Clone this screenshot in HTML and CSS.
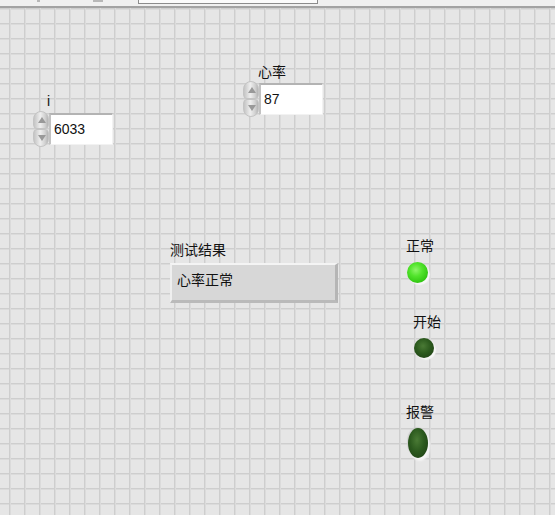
FILE: index.html
```html
<!DOCTYPE html>
<html>
<head>
<meta charset="utf-8">
<link rel="stylesheet" href="styles.css">
</head>
<body>
<div class="toolbar">
  <div class="tb-box"></div>
  <span class="tb-mark tb-m1"></span>
  <span class="tb-mark tb-m2"></span>
</div>
<div class="panel">
  <div class="label lbl-i">i</div>
  <div class="num num-i">
    <div class="spin"><span class="btn up"><i></i></span><span class="btn down"><i></i></span></div>
    <div class="field">6033</div>
  </div>

  <div class="label lbl-hr">心率</div>
  <div class="num num-hr">
    <div class="spin"><span class="btn up"><i></i></span><span class="btn down"><i></i></span></div>
    <div class="field">87</div>
  </div>

  <div class="label lbl-res">测试结果</div>
  <div class="strind"><div class="strind-in">心率正常</div></div>

  <div class="label lbl-ok">正常</div>
  <div class="led led-ok"></div>

  <div class="label lbl-start">开始</div>
  <div class="led led-start"></div>

  <div class="label lbl-alarm">报警</div>
  <div class="led led-alarm"></div>
</div>
</body>
</html>
```

FILE: styles.css
```css
html, body {
  margin: 0;
  padding: 0;
  width: 555px;
  height: 515px;
  overflow: hidden;
  font-family: "Liberation Sans", "Noto Sans CJK SC", sans-serif;
}
.toolbar {
  position: relative;
  height: 6px;
  background: #f0f0f0;
  border-bottom: 2px solid #a3a3a3;
}
.tb-box {
  position: absolute;
  left: 138px;
  top: -2px;
  width: 178px;
  height: 5px;
  background: #fbfbfb;
  border: 1px solid #8c8c8c;
  border-top: none;
}
.tb-mark {
  position: absolute;
  top: 0;
  height: 2px;
  background: #b8b8b8;
}
.tb-m1 { left: 37px; width: 3px; }
.tb-m2 { left: 93px; width: 10px; }
.panel {
  position: relative;
  height: 507px;
  background-color: #e6e6e6;
  background-image:
    linear-gradient(to right, #cecece 0, #cecece 1px, #dbdbdb 1px, #dbdbdb 2px, transparent 2px),
    linear-gradient(to bottom, #cecece 0, #cecece 1px, #dbdbdb 1px, #dbdbdb 2px, transparent 2px);
  background-size: 15px 15px;
  background-position: 9px 0px, 0 0px;
}
.label {
  position: absolute;
  font-family: "Noto Sans CJK SC", "Liberation Sans", sans-serif;
  font-size: 14px;
  line-height: 16px;
  color: #111;
  white-space: nowrap;
}
.lbl-i { left: 47px; top: 85px; font-family: "Liberation Sans", sans-serif; font-size: 14px; }
.lbl-hr { left: 258px; top: 55px; }
.lbl-res { left: 170px; top: 233px; }
.lbl-ok { left: 406px; top: 229px; }
.lbl-start { left: 413px; top: 305px; }
.lbl-alarm { left: 406px; top: 395px; }

.num {
  position: absolute;
  display: flex;
  align-items: center;
}
.num-i { left: 33px; top: 103px; }
.num-hr { left: 243px; top: 73px; }
.spin {
  display: flex;
  flex-direction: column;
  width: 16px;
  height: 36px;
}
.btn {
  position: relative;
  flex: 1;
  border-radius: 8px 8px 4px 4px;
  background: linear-gradient(to right, #c4c4c4, #eeeeee 45%, #d0d0d0 80%, #b4b4b4);
  border: 1px solid #c4c4c4;
}
.btn.down { border-radius: 4px 4px 8px 8px; }
.btn i {
  position: absolute;
  left: 4px;
  width: 0;
  height: 0;
  border-left: 4px solid transparent;
  border-right: 4px solid transparent;
}
.btn.up i { top: 5px; border-bottom: 6px solid #999; }
.btn.down i { top: 5px; border-top: 6px solid #999; }
.field {
  width: 58px;
  height: 29px;
  background: #fff;
  border-top: 2px solid #b3b3b3;
  border-left: 2px solid #c2c2c2;
  border-right: 1px solid #f2f2f2;
  border-bottom: 1px solid #f2f2f2;
  padding-left: 3px;
  font-size: 14px;
  line-height: 29px;
  color: #111;
}
.strind {
  position: absolute;
  left: 170px;
  top: 255px;
  width: 168px;
  height: 40px;
  box-sizing: border-box;
  border-top: 2px solid #f4f4f4;
  border-left: 2px solid #efefef;
  border-right: 3px solid #b5b5b5;
  border-bottom: 3px solid #bababa;
  background: #d7d7d7;
}
.strind-in {
  padding: 5px 0 0 5px;
  font-family: "Noto Sans CJK SC", sans-serif;
  font-size: 14px;
  line-height: 18px;
  color: #111;
}
.led {
  position: absolute;
  border-radius: 50%;
}
.led-ok {
  left: 407px;
  top: 254px;
  width: 21px;
  height: 21px;
  background: radial-gradient(circle at 42% 38%, #8ef56a 0, #52e42c 35%, #2fc510 75%, #1f9a0a 100%);
  box-shadow: 2px 2px 1px #f6f6f6;
}
.led-start {
  left: 414px;
  top: 330px;
  width: 20px;
  height: 20px;
  background: radial-gradient(circle at 45% 40%, #4a7a35 0, #2c5a1e 45%, #1b3a12 100%);
  box-shadow: 2px 2px 1px #f6f6f6;
}
.led-alarm {
  left: 408px;
  top: 420px;
  width: 20px;
  height: 30px;
  background: radial-gradient(ellipse at 45% 40%, #4a7a35 0, #2c5a1e 45%, #1b3a12 100%);
  box-shadow: 2px 3px 2px #f6f6f6, -1px -1px 1px #cfcfcf;
}
```
